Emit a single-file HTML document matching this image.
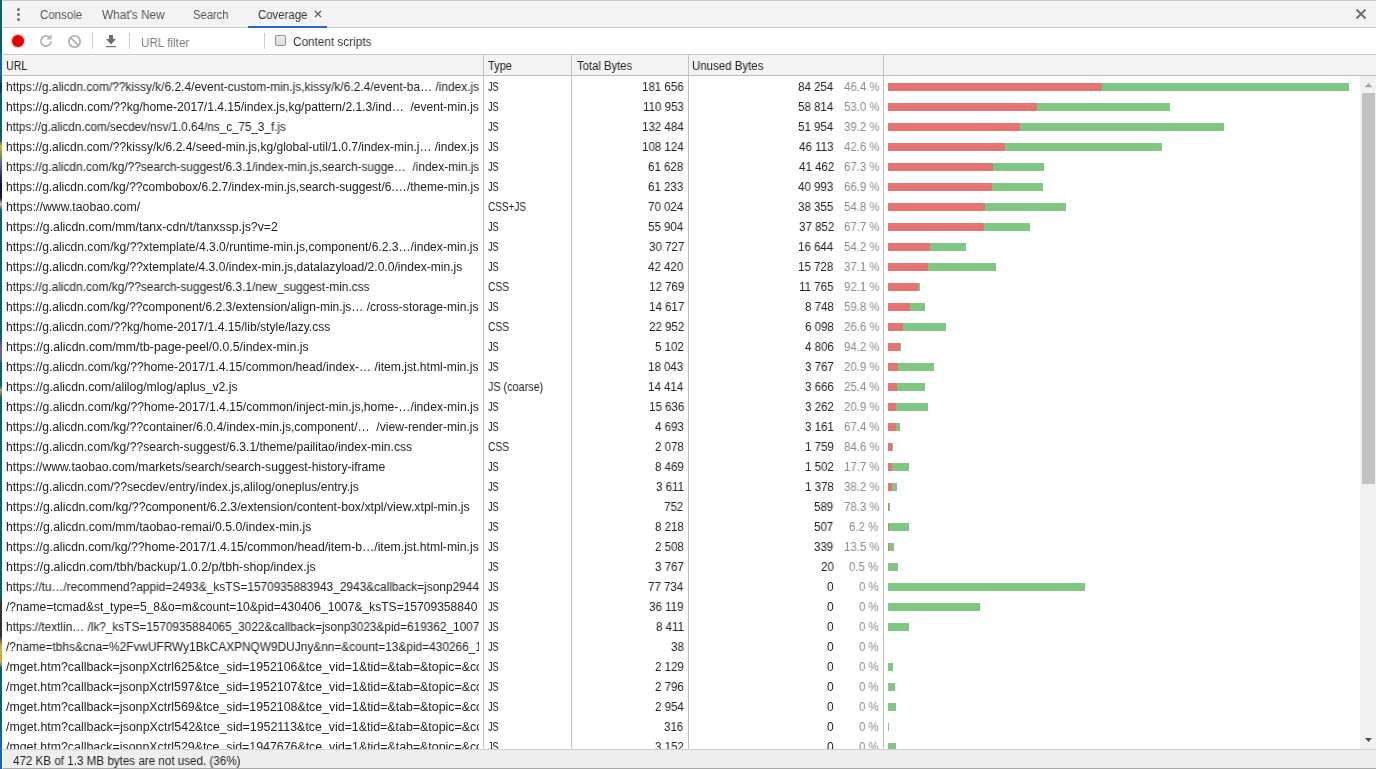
<!DOCTYPE html>
<html><head><meta charset="utf-8"><style>
html,body{margin:0;padding:0;width:1376px;height:769px;overflow:hidden;background:#fff}
.r{position:absolute}
.t{position:absolute;white-space:pre;font-family:"Liberation Sans",sans-serif;font-size:12px;line-height:20px;height:20px;transform-origin:0 0;will-change:transform}
</style></head><body>
<div class="r" style="left:0px;top:0px;width:1376px;height:1px;background:#c9c9c9;"></div>
<div class="r" style="left:0px;top:1px;width:1376px;height:26px;background:#f3f3f3;"></div>
<div class="r" style="left:0px;top:27px;width:1376px;height:1px;background:#cdcdcd;"></div>
<div class="r" style="left:0px;top:28px;width:1376px;height:26px;background:#ffffff;"></div>
<div class="r" style="left:0px;top:54px;width:1376px;height:1px;background:#cdcdcd;"></div>
<div class="r" style="left:0px;top:55px;width:1376px;height:20px;background:#f3f3f3;"></div>
<div class="r" style="left:0px;top:75px;width:1376px;height:1px;background:#bdbdbd;"></div>
<div class="r" style="left:0px;top:749px;width:1376px;height:1px;background:#cdcdcd;"></div>
<div class="r" style="left:0px;top:750px;width:1376px;height:18px;background:#eeeeee;"></div>
<div class="r" style="left:0px;top:768px;width:1376px;height:1px;background:#a8a8a8;"></div>
<div class="r" style="left:17px;top:7.5px;width:3px;height:3px;border-radius:50%;background:#6e6e6e"></div>
<div class="r" style="left:17px;top:12.5px;width:3px;height:3px;border-radius:50%;background:#6e6e6e"></div>
<div class="r" style="left:17px;top:17.5px;width:3px;height:3px;border-radius:50%;background:#6e6e6e"></div>
<div class="t" style="left:39.80px;top:5px;color:#555;transform:scaleX(0.9591);">Console</div>
<div class="t" style="left:101.80px;top:5px;color:#555;transform:scaleX(0.9844);">What&#x27;s New</div>
<div class="t" style="left:192.76px;top:5px;color:#555;transform:scaleX(0.9351);">Search</div>
<div class="t" style="left:257.80px;top:5px;color:#333;transform:scaleX(0.9500);">Coverage</div>
<div class="r" style="left:248px;top:26px;width:79px;height:2px;background:#2a6acb;"></div>
<svg class="r" style="left:314px;top:10px" width="8" height="8" viewBox="0 0 8 8"><path d="M1 1L7 7M7 1L1 7" stroke="#5f5f5f" stroke-width="1.3"/></svg>
<svg class="r" style="left:1355px;top:8px" width="12" height="12" viewBox="0 0 12 12"><path d="M1.5 1.5L10.5 10.5M10.5 1.5L1.5 10.5" stroke="#6b6b6b" stroke-width="1.8"/></svg>
<div class="r" style="left:12px;top:35px;width:12px;height:12px;border-radius:50%;background:#e40000;box-shadow:0 0 2px 1px rgba(255,120,120,.55)"></div>
<svg class="r" style="left:38px;top:33px" width="16" height="16" viewBox="0 0 16 16"><path d="M11.9 4.7A5.1 5.1 0 1 0 13.1 8" fill="none" stroke="#b3b3b3" stroke-width="1.8"/><path d="M13.6 1.2V6.4H8.2Z" fill="#b3b3b3"/></svg>
<svg class="r" style="left:66px;top:33px" width="17" height="17" viewBox="0 0 17 17"><circle cx="8.5" cy="8.5" r="5.6" fill="none" stroke="#b5b5b5" stroke-width="1.9"/><path d="M4.6 4.6L12.4 12.4" stroke="#b5b5b5" stroke-width="1.9"/></svg>
<div class="r" style="left:92px;top:33px;width:1px;height:16px;background:#cccccc;"></div>
<svg class="r" style="left:104px;top:34px" width="14" height="14" viewBox="0 0 14 14"><path d="M5 1H9V5H12L7 10.6L2 5H5Z" fill="#6e6e6e"/><rect x="2" y="12" width="10" height="1.2" fill="#6e6e6e"/></svg>
<div class="r" style="left:129px;top:33px;width:1px;height:16px;background:#cccccc;"></div>
<div class="t" style="left:140.73px;top:33px;color:#7a7a7a;transform:scaleX(0.9735);">URL filter</div>
<div class="r" style="left:264px;top:33px;width:1px;height:16px;background:#cccccc;"></div>
<div class="r" style="left:275px;top:35px;width:9px;height:9px;border:1px solid #8e8e8e;border-radius:2px;background:linear-gradient(#ededed,#dedede)"></div>
<div class="t" style="left:293.40px;top:32px;color:#333;transform:scaleX(0.9800);">Content scripts</div>
<div class="t" style="left:5.61px;top:56px;color:#222;transform:scaleX(0.8913);">URL</div>
<div class="t" style="left:488.10px;top:56px;color:#222;transform:scaleX(0.9200);">Type</div>
<div class="t" style="left:576.80px;top:56px;color:#222;transform:scaleX(0.9390);">Total Bytes</div>
<div class="t" style="left:692.44px;top:56px;color:#222;transform:scaleX(0.9554);">Unused Bytes</div>
<div class="r" style="left:483px;top:55px;width:1px;height:694px;background:#c4c4c4;"></div>
<div class="r" style="left:571px;top:55px;width:1px;height:694px;background:#c4c4c4;"></div>
<div class="r" style="left:688px;top:55px;width:1px;height:694px;background:#c4c4c4;"></div>
<div class="r" style="left:883px;top:55px;width:1px;height:694px;background:#c4c4c4;"></div>
<div class="r" style="left:0;top:76px;width:1360px;height:673px;overflow:hidden">
<div class="r" style="left:0;top:-76px;width:479px;height:769px;overflow:hidden">
<div class="t" style="left:6.01px;top:77px;color:#222;transform:scaleX(0.9949);">https://g.alicdn.com/??kissy/k/6.2.4/event-custom-min.js,kissy/k/6.2.4/event-ba… /index.js</div>
<div class="t" style="left:5.99px;top:97px;color:#222;transform:scaleX(1.0055);">https://g.alicdn.com/??kg/home-2017/1.4.15/index.js,kg/pattern/2.1.3/ind…  /event-min.js</div>
<div class="t" style="left:6.03px;top:117px;color:#222;transform:scaleX(0.9734);">https://g.alicdn.com/secdev/nsv/1.0.64/ns_c_75_3_f.js</div>
<div class="t" style="left:6.00px;top:137px;color:#222;transform:scaleX(1.0013);">https://g.alicdn.com/??kissy/k/6.2.4/seed-min.js,kg/global-util/1.0.7/index-min.j… /index.js</div>
<div class="t" style="left:6.01px;top:157px;color:#222;transform:scaleX(0.9908);">https://g.alicdn.com/kg/??search-suggest/6.3.1/index-min.js,search-sugge…  /index-min.js</div>
<div class="t" style="left:6.00px;top:177px;color:#222;transform:scaleX(1.0034);">https://g.alicdn.com/kg/??combobox/6.2.7/index-min.js,search-suggest/6.…/theme-min.js</div>
<div class="t" style="left:5.97px;top:197px;color:#222;transform:scaleX(1.0254);">https://www.taobao.com/</div>
<div class="t" style="left:5.98px;top:217px;color:#222;transform:scaleX(1.0227);">https://g.alicdn.com/mm/tanx-cdn/t/tanxssp.js?v=2</div>
<div class="t" style="left:5.99px;top:237px;color:#222;transform:scaleX(1.0077);">https://g.alicdn.com/kg/??xtemplate/4.3.0/runtime-min.js,component/6.2.3…/index-min.js</div>
<div class="t" style="left:5.99px;top:257px;color:#222;transform:scaleX(1.0058);">https://g.alicdn.com/kg/??xtemplate/4.3.0/index-min.js,datalazyload/2.0.0/index-min.js</div>
<div class="t" style="left:6.01px;top:277px;color:#222;transform:scaleX(0.9910);">https://g.alicdn.com/kg/??search-suggest/6.3.1/new_suggest-min.css</div>
<div class="t" style="left:6.00px;top:297px;color:#222;transform:scaleX(1.0034);">https://g.alicdn.com/kg/??component/6.2.3/extension/align-min.js… /cross-storage-min.js</div>
<div class="t" style="left:5.99px;top:317px;color:#222;transform:scaleX(1.0075);">https://g.alicdn.com/??kg/home-2017/1.4.15/lib/style/lazy.css</div>
<div class="t" style="left:5.97px;top:337px;color:#222;transform:scaleX(1.0269);">https://g.alicdn.com/mm/tb-page-peel/0.0.5/index-min.js</div>
<div class="t" style="left:5.99px;top:357px;color:#222;transform:scaleX(1.0120);">https://g.alicdn.com/kg/??home-2017/1.4.15/common/head/index-… /item.jst.html-min.js</div>
<div class="t" style="left:5.98px;top:377px;color:#222;transform:scaleX(1.0181);">https://g.alicdn.com/alilog/mlog/aplus_v2.js</div>
<div class="t" style="left:5.99px;top:397px;color:#222;transform:scaleX(1.0142);">https://g.alicdn.com/kg/??home-2017/1.4.15/common/inject-min.js,home-…/index-min.js</div>
<div class="t" style="left:5.99px;top:417px;color:#222;transform:scaleX(1.0077);">https://g.alicdn.com/kg/??container/6.0.4/index-min.js,component/…  /view-render-min.js</div>
<div class="t" style="left:5.99px;top:437px;color:#222;transform:scaleX(1.0080);">https://g.alicdn.com/kg/??search-suggest/6.3.1/theme/pailitao/index-min.css</div>
<div class="t" style="left:5.99px;top:457px;color:#222;transform:scaleX(1.0118);">https://www.taobao.com/markets/search/search-suggest-history-iframe</div>
<div class="t" style="left:5.99px;top:477px;color:#222;transform:scaleX(1.0080);">https://g.alicdn.com/??secdev/entry/index.js,alilog/oneplus/entry.js</div>
<div class="t" style="left:5.97px;top:497px;color:#222;transform:scaleX(1.0253);">https://g.alicdn.com/kg/??component/6.2.3/extension/content-box/xtpl/view.xtpl-min.js</div>
<div class="t" style="left:5.98px;top:517px;color:#222;transform:scaleX(1.0242);">https://g.alicdn.com/mm/taobao-remai/0.5.0/index-min.js</div>
<div class="t" style="left:5.98px;top:537px;color:#222;transform:scaleX(1.0186);">https://g.alicdn.com/kg/??home-2017/1.4.15/common/head/item-b…/item.jst.html-min.js</div>
<div class="t" style="left:5.97px;top:557px;color:#222;transform:scaleX(1.0339);">https://g.alicdn.com/tbh/backup/1.0.2/p/tbh-shop/index.js</div>
<div class="t" style="left:6.01px;top:577px;color:#222;transform:scaleX(0.9908);">https://tu…/recommend?appid=2493&amp;_ksTS=1570935883943_2943&amp;callback=jsonp2944</div>
<div class="t" style="left:6.20px;top:597px;color:#222;transform:scaleX(1.0035);">/?name=tcmad&amp;st_type=5_8&amp;o=m&amp;count=10&amp;pid=430406_1007&amp;_ksTS=15709358840</div>
<div class="t" style="left:6.02px;top:617px;color:#222;transform:scaleX(0.9846);">https://textlin… /lk?_ksTS=1570935884065_3022&amp;callback=jsonp3023&amp;pid=619362_1007</div>
<div class="t" style="left:6.20px;top:637px;color:#222;transform:scaleX(0.9897);">/?name=tbhs&amp;cna=%2FvwUFRWy1BkCAXPNQW9DUJny&amp;nn=&amp;count=13&amp;pid=430266_1007</div>
<div class="t" style="left:6.20px;top:657px;color:#222;transform:scaleX(1.0303);">/mget.htm?callback=jsonpXctrl625&amp;tce_sid=1952106&amp;tce_vid=1&amp;tid=&amp;tab=&amp;topic=&amp;count=</div>
<div class="t" style="left:6.20px;top:677px;color:#222;transform:scaleX(1.0303);">/mget.htm?callback=jsonpXctrl597&amp;tce_sid=1952107&amp;tce_vid=1&amp;tid=&amp;tab=&amp;topic=&amp;count=</div>
<div class="t" style="left:6.20px;top:697px;color:#222;transform:scaleX(1.0303);">/mget.htm?callback=jsonpXctrl569&amp;tce_sid=1952108&amp;tce_vid=1&amp;tid=&amp;tab=&amp;topic=&amp;count=</div>
<div class="t" style="left:6.20px;top:717px;color:#222;transform:scaleX(1.0325);">/mget.htm?callback=jsonpXctrl542&amp;tce_sid=1952113&amp;tce_vid=1&amp;tid=&amp;tab=&amp;topic=&amp;count=</div>
<div class="t" style="left:6.20px;top:737px;color:#222;transform:scaleX(1.0303);">/mget.htm?callback=jsonpXctrl529&amp;tce_sid=1947676&amp;tce_vid=1&amp;tid=&amp;tab=&amp;topic=&amp;count=</div>
</div><div class="r" style="left:0;top:-76px;width:1360px;height:769px">
<div class="t" style="left:488.10px;top:77px;color:#222;transform:scaleX(0.7500);">JS</div>
<div class="t" style="left:642.22px;top:77px;color:#222;transform:scaleX(0.9600);">181 656</div>
<div class="t" style="left:797.98px;top:77px;color:#222;transform:scaleX(0.9600);">84 254</div>
<div class="t" style="left:843.65px;top:77px;color:#8a8a8a;transform:scaleX(0.9500);">46.4 %</div>
<div class="r" style="left:888px;top:83px;width:461.0px;height:8px;background:#81c784;"></div>
<div class="r" style="left:888px;top:83px;width:213.82px;height:8px;background:#e57373;"></div>
<div class="t" style="left:488.10px;top:97px;color:#222;transform:scaleX(0.7500);">JS</div>
<div class="t" style="left:643.18px;top:97px;color:#222;transform:scaleX(0.9600);">110 953</div>
<div class="t" style="left:797.98px;top:97px;color:#222;transform:scaleX(0.9600);">58 814</div>
<div class="t" style="left:843.65px;top:97px;color:#8a8a8a;transform:scaleX(0.9500);">53.0 %</div>
<div class="r" style="left:888px;top:103px;width:281.57px;height:8px;background:#81c784;"></div>
<div class="r" style="left:888px;top:103px;width:149.26px;height:8px;background:#e57373;"></div>
<div class="t" style="left:488.10px;top:117px;color:#222;transform:scaleX(0.7500);">JS</div>
<div class="t" style="left:642.22px;top:117px;color:#222;transform:scaleX(0.9600);">132 484</div>
<div class="t" style="left:797.98px;top:117px;color:#222;transform:scaleX(0.9600);">51 954</div>
<div class="t" style="left:843.65px;top:117px;color:#8a8a8a;transform:scaleX(0.9500);">39.2 %</div>
<div class="r" style="left:888px;top:123px;width:336.21px;height:8px;background:#81c784;"></div>
<div class="r" style="left:888px;top:123px;width:131.85px;height:8px;background:#e57373;"></div>
<div class="t" style="left:488.10px;top:137px;color:#222;transform:scaleX(0.7500);">JS</div>
<div class="t" style="left:642.22px;top:137px;color:#222;transform:scaleX(0.9600);">108 124</div>
<div class="t" style="left:798.94px;top:137px;color:#222;transform:scaleX(0.9600);">46 113</div>
<div class="t" style="left:843.65px;top:137px;color:#8a8a8a;transform:scaleX(0.9500);">42.6 %</div>
<div class="r" style="left:888px;top:143px;width:274.39px;height:8px;background:#81c784;"></div>
<div class="r" style="left:888px;top:143px;width:117.02px;height:8px;background:#e57373;"></div>
<div class="t" style="left:488.10px;top:157px;color:#222;transform:scaleX(0.7500);">JS</div>
<div class="t" style="left:647.98px;top:157px;color:#222;transform:scaleX(0.9600);">61 628</div>
<div class="t" style="left:798.94px;top:157px;color:#222;transform:scaleX(0.9600);">41 462</div>
<div class="t" style="left:843.65px;top:157px;color:#8a8a8a;transform:scaleX(0.9500);">67.3 %</div>
<div class="r" style="left:888px;top:163px;width:156.4px;height:8px;background:#81c784;"></div>
<div class="r" style="left:888px;top:163px;width:105.22px;height:8px;background:#e57373;"></div>
<div class="t" style="left:488.10px;top:177px;color:#222;transform:scaleX(0.7500);">JS</div>
<div class="t" style="left:647.98px;top:177px;color:#222;transform:scaleX(0.9600);">61 233</div>
<div class="t" style="left:797.98px;top:177px;color:#222;transform:scaleX(0.9600);">40 993</div>
<div class="t" style="left:843.65px;top:177px;color:#8a8a8a;transform:scaleX(0.9500);">66.9 %</div>
<div class="r" style="left:888px;top:183px;width:155.39px;height:8px;background:#81c784;"></div>
<div class="r" style="left:888px;top:183px;width:104.03px;height:8px;background:#e57373;"></div>
<div class="t" style="left:488.10px;top:197px;color:#222;transform:scaleX(0.8300);">CSS+JS</div>
<div class="t" style="left:647.98px;top:197px;color:#222;transform:scaleX(0.9600);">70 024</div>
<div class="t" style="left:797.98px;top:197px;color:#222;transform:scaleX(0.9600);">38 355</div>
<div class="t" style="left:843.65px;top:197px;color:#8a8a8a;transform:scaleX(0.9500);">54.8 %</div>
<div class="r" style="left:888px;top:203px;width:177.7px;height:8px;background:#81c784;"></div>
<div class="r" style="left:888px;top:203px;width:97.34px;height:8px;background:#e57373;"></div>
<div class="t" style="left:488.10px;top:217px;color:#222;transform:scaleX(0.7500);">JS</div>
<div class="t" style="left:647.98px;top:217px;color:#222;transform:scaleX(0.9600);">55 904</div>
<div class="t" style="left:798.94px;top:217px;color:#222;transform:scaleX(0.9600);">37 852</div>
<div class="t" style="left:843.65px;top:217px;color:#8a8a8a;transform:scaleX(0.9500);">67.7 %</div>
<div class="r" style="left:888px;top:223px;width:141.87px;height:8px;background:#81c784;"></div>
<div class="r" style="left:888px;top:223px;width:96.06px;height:8px;background:#e57373;"></div>
<div class="t" style="left:488.10px;top:237px;color:#222;transform:scaleX(0.7500);">JS</div>
<div class="t" style="left:648.94px;top:237px;color:#222;transform:scaleX(0.9600);">30 727</div>
<div class="t" style="left:797.98px;top:237px;color:#222;transform:scaleX(0.9600);">16 644</div>
<div class="t" style="left:843.65px;top:237px;color:#8a8a8a;transform:scaleX(0.9500);">54.2 %</div>
<div class="r" style="left:888px;top:243px;width:77.98px;height:8px;background:#81c784;"></div>
<div class="r" style="left:888px;top:243px;width:42.24px;height:8px;background:#e57373;"></div>
<div class="t" style="left:488.10px;top:257px;color:#222;transform:scaleX(0.7500);">JS</div>
<div class="t" style="left:647.98px;top:257px;color:#222;transform:scaleX(0.9600);">42 420</div>
<div class="t" style="left:797.98px;top:257px;color:#222;transform:scaleX(0.9600);">15 728</div>
<div class="t" style="left:843.65px;top:257px;color:#8a8a8a;transform:scaleX(0.9500);">37.1 %</div>
<div class="r" style="left:888px;top:263px;width:107.65px;height:8px;background:#81c784;"></div>
<div class="r" style="left:888px;top:263px;width:39.91px;height:8px;background:#e57373;"></div>
<div class="t" style="left:488.10px;top:277px;color:#222;transform:scaleX(0.8500);">CSS</div>
<div class="t" style="left:648.94px;top:277px;color:#222;transform:scaleX(0.9600);">12 769</div>
<div class="t" style="left:798.94px;top:277px;color:#222;transform:scaleX(0.9600);">11 765</div>
<div class="t" style="left:843.65px;top:277px;color:#8a8a8a;transform:scaleX(0.9500);">92.1 %</div>
<div class="r" style="left:888px;top:283px;width:32.4px;height:8px;background:#81c784;"></div>
<div class="r" style="left:888px;top:283px;width:29.86px;height:8px;background:#e57373;"></div>
<div class="t" style="left:488.10px;top:297px;color:#222;transform:scaleX(0.7500);">JS</div>
<div class="t" style="left:648.94px;top:297px;color:#222;transform:scaleX(0.9600);">14 617</div>
<div class="t" style="left:804.70px;top:297px;color:#222;transform:scaleX(0.9600);">8 748</div>
<div class="t" style="left:843.65px;top:297px;color:#8a8a8a;transform:scaleX(0.9500);">59.8 %</div>
<div class="r" style="left:888px;top:303px;width:37.09px;height:8px;background:#81c784;"></div>
<div class="r" style="left:888px;top:303px;width:22.2px;height:8px;background:#e57373;"></div>
<div class="t" style="left:488.10px;top:317px;color:#222;transform:scaleX(0.8500);">CSS</div>
<div class="t" style="left:648.94px;top:317px;color:#222;transform:scaleX(0.9600);">22 952</div>
<div class="t" style="left:804.70px;top:317px;color:#222;transform:scaleX(0.9600);">6 098</div>
<div class="t" style="left:843.65px;top:317px;color:#8a8a8a;transform:scaleX(0.9500);">26.6 %</div>
<div class="r" style="left:888px;top:323px;width:58.25px;height:8px;background:#81c784;"></div>
<div class="r" style="left:888px;top:323px;width:15.48px;height:8px;background:#e57373;"></div>
<div class="t" style="left:488.10px;top:337px;color:#222;transform:scaleX(0.7500);">JS</div>
<div class="t" style="left:654.70px;top:337px;color:#222;transform:scaleX(0.9600);">5 102</div>
<div class="t" style="left:804.70px;top:337px;color:#222;transform:scaleX(0.9600);">4 806</div>
<div class="t" style="left:843.65px;top:337px;color:#8a8a8a;transform:scaleX(0.9500);">94.2 %</div>
<div class="r" style="left:888px;top:343px;width:12.95px;height:8px;background:#81c784;"></div>
<div class="r" style="left:888px;top:343px;width:12.2px;height:8px;background:#e57373;"></div>
<div class="t" style="left:488.10px;top:357px;color:#222;transform:scaleX(0.7500);">JS</div>
<div class="t" style="left:647.98px;top:357px;color:#222;transform:scaleX(0.9600);">18 043</div>
<div class="t" style="left:804.70px;top:357px;color:#222;transform:scaleX(0.9600);">3 767</div>
<div class="t" style="left:843.65px;top:357px;color:#8a8a8a;transform:scaleX(0.9500);">20.9 %</div>
<div class="r" style="left:888px;top:363px;width:45.79px;height:8px;background:#81c784;"></div>
<div class="r" style="left:888px;top:363px;width:9.56px;height:8px;background:#e57373;"></div>
<div class="t" style="left:488.10px;top:377px;color:#222;transform:scaleX(0.9000);">JS (coarse)</div>
<div class="t" style="left:647.98px;top:377px;color:#222;transform:scaleX(0.9600);">14 414</div>
<div class="t" style="left:804.70px;top:377px;color:#222;transform:scaleX(0.9600);">3 666</div>
<div class="t" style="left:843.65px;top:377px;color:#8a8a8a;transform:scaleX(0.9500);">25.4 %</div>
<div class="r" style="left:888px;top:383px;width:36.58px;height:8px;background:#81c784;"></div>
<div class="r" style="left:888px;top:383px;width:9.3px;height:8px;background:#e57373;"></div>
<div class="t" style="left:488.10px;top:397px;color:#222;transform:scaleX(0.7500);">JS</div>
<div class="t" style="left:648.94px;top:397px;color:#222;transform:scaleX(0.9600);">15 636</div>
<div class="t" style="left:804.70px;top:397px;color:#222;transform:scaleX(0.9600);">3 262</div>
<div class="t" style="left:843.65px;top:397px;color:#8a8a8a;transform:scaleX(0.9500);">20.9 %</div>
<div class="r" style="left:888px;top:403px;width:39.68px;height:8px;background:#81c784;"></div>
<div class="r" style="left:888px;top:403px;width:8.28px;height:8px;background:#e57373;"></div>
<div class="t" style="left:488.10px;top:417px;color:#222;transform:scaleX(0.7500);">JS</div>
<div class="t" style="left:654.70px;top:417px;color:#222;transform:scaleX(0.9600);">4 693</div>
<div class="t" style="left:804.70px;top:417px;color:#222;transform:scaleX(0.9600);">3 161</div>
<div class="t" style="left:843.65px;top:417px;color:#8a8a8a;transform:scaleX(0.9500);">67.4 %</div>
<div class="r" style="left:888px;top:423px;width:11.91px;height:8px;background:#81c784;"></div>
<div class="r" style="left:888px;top:423px;width:8.02px;height:8px;background:#e57373;"></div>
<div class="t" style="left:488.10px;top:437px;color:#222;transform:scaleX(0.8500);">CSS</div>
<div class="t" style="left:654.70px;top:437px;color:#222;transform:scaleX(0.9600);">2 078</div>
<div class="t" style="left:804.70px;top:437px;color:#222;transform:scaleX(0.9600);">1 759</div>
<div class="t" style="left:843.65px;top:437px;color:#8a8a8a;transform:scaleX(0.9500);">84.6 %</div>
<div class="r" style="left:888px;top:443px;width:5.27px;height:8px;background:#81c784;"></div>
<div class="r" style="left:888px;top:443px;width:4.46px;height:8px;background:#e57373;"></div>
<div class="t" style="left:488.10px;top:457px;color:#222;transform:scaleX(0.7500);">JS</div>
<div class="t" style="left:654.70px;top:457px;color:#222;transform:scaleX(0.9600);">8 469</div>
<div class="t" style="left:804.70px;top:457px;color:#222;transform:scaleX(0.9600);">1 502</div>
<div class="t" style="left:843.65px;top:457px;color:#8a8a8a;transform:scaleX(0.9500);">17.7 %</div>
<div class="r" style="left:888px;top:463px;width:21.49px;height:8px;background:#81c784;"></div>
<div class="r" style="left:888px;top:463px;width:3.81px;height:8px;background:#e57373;"></div>
<div class="t" style="left:488.10px;top:477px;color:#222;transform:scaleX(0.7500);">JS</div>
<div class="t" style="left:655.66px;top:477px;color:#222;transform:scaleX(0.9600);">3 611</div>
<div class="t" style="left:804.70px;top:477px;color:#222;transform:scaleX(0.9600);">1 378</div>
<div class="t" style="left:843.65px;top:477px;color:#8a8a8a;transform:scaleX(0.9500);">38.2 %</div>
<div class="r" style="left:888px;top:483px;width:9.16px;height:8px;background:#81c784;"></div>
<div class="r" style="left:888px;top:483px;width:3.5px;height:8px;background:#e57373;"></div>
<div class="t" style="left:488.10px;top:497px;color:#222;transform:scaleX(0.7500);">JS</div>
<div class="t" style="left:664.30px;top:497px;color:#222;transform:scaleX(0.9600);">752</div>
<div class="t" style="left:814.30px;top:497px;color:#222;transform:scaleX(0.9600);">589</div>
<div class="t" style="left:843.65px;top:497px;color:#8a8a8a;transform:scaleX(0.9500);">78.3 %</div>
<div class="r" style="left:888px;top:503px;width:1.91px;height:8px;background:#81c784;"></div>
<div class="r" style="left:888px;top:503px;width:1.49px;height:8px;background:#e57373;"></div>
<div class="t" style="left:488.10px;top:517px;color:#222;transform:scaleX(0.7500);">JS</div>
<div class="t" style="left:654.70px;top:517px;color:#222;transform:scaleX(0.9600);">8 218</div>
<div class="t" style="left:814.30px;top:517px;color:#222;transform:scaleX(0.9600);">507</div>
<div class="t" style="left:849.35px;top:517px;color:#8a8a8a;transform:scaleX(0.9500);">6.2 %</div>
<div class="r" style="left:888px;top:523px;width:20.86px;height:8px;background:#81c784;"></div>
<div class="r" style="left:888px;top:523px;width:1.29px;height:8px;background:#e57373;"></div>
<div class="t" style="left:488.10px;top:537px;color:#222;transform:scaleX(0.7500);">JS</div>
<div class="t" style="left:654.70px;top:537px;color:#222;transform:scaleX(0.9600);">2 508</div>
<div class="t" style="left:814.30px;top:537px;color:#222;transform:scaleX(0.9600);">339</div>
<div class="t" style="left:843.65px;top:537px;color:#8a8a8a;transform:scaleX(0.9500);">13.5 %</div>
<div class="r" style="left:888px;top:543px;width:6.36px;height:8px;background:#81c784;"></div>
<div class="r" style="left:888px;top:543px;width:0.86px;height:8px;background:#e57373;"></div>
<div class="t" style="left:488.10px;top:557px;color:#222;transform:scaleX(0.7500);">JS</div>
<div class="t" style="left:654.70px;top:557px;color:#222;transform:scaleX(0.9600);">3 767</div>
<div class="t" style="left:821.02px;top:557px;color:#222;transform:scaleX(0.9600);">20</div>
<div class="t" style="left:849.35px;top:557px;color:#8a8a8a;transform:scaleX(0.9500);">0.5 %</div>
<div class="r" style="left:888px;top:563px;width:9.56px;height:8px;background:#81c784;"></div>
<div class="t" style="left:488.10px;top:577px;color:#222;transform:scaleX(0.7500);">JS</div>
<div class="t" style="left:647.98px;top:577px;color:#222;transform:scaleX(0.9600);">77 734</div>
<div class="t" style="left:827.48px;top:577px;color:#222;transform:scaleX(0.9600);">0</div>
<div class="t" style="left:858.85px;top:577px;color:#8a8a8a;transform:scaleX(0.9500);">0 %</div>
<div class="r" style="left:888px;top:583px;width:197.27px;height:8px;background:#81c784;"></div>
<div class="t" style="left:488.10px;top:597px;color:#222;transform:scaleX(0.7500);">JS</div>
<div class="t" style="left:648.94px;top:597px;color:#222;transform:scaleX(0.9600);">36 119</div>
<div class="t" style="left:827.48px;top:597px;color:#222;transform:scaleX(0.9600);">0</div>
<div class="t" style="left:858.85px;top:597px;color:#8a8a8a;transform:scaleX(0.9500);">0 %</div>
<div class="r" style="left:888px;top:603px;width:91.66px;height:8px;background:#81c784;"></div>
<div class="t" style="left:488.10px;top:617px;color:#222;transform:scaleX(0.7500);">JS</div>
<div class="t" style="left:655.66px;top:617px;color:#222;transform:scaleX(0.9600);">8 411</div>
<div class="t" style="left:827.48px;top:617px;color:#222;transform:scaleX(0.9600);">0</div>
<div class="t" style="left:858.85px;top:617px;color:#8a8a8a;transform:scaleX(0.9500);">0 %</div>
<div class="r" style="left:888px;top:623px;width:21.35px;height:8px;background:#81c784;"></div>
<div class="t" style="left:488.10px;top:637px;color:#222;transform:scaleX(0.7500);">JS</div>
<div class="t" style="left:671.02px;top:637px;color:#222;transform:scaleX(0.9600);">38</div>
<div class="t" style="left:827.48px;top:637px;color:#222;transform:scaleX(0.9600);">0</div>
<div class="t" style="left:858.85px;top:637px;color:#8a8a8a;transform:scaleX(0.9500);">0 %</div>
<div class="t" style="left:488.10px;top:657px;color:#222;transform:scaleX(0.7500);">JS</div>
<div class="t" style="left:654.70px;top:657px;color:#222;transform:scaleX(0.9600);">2 129</div>
<div class="t" style="left:827.48px;top:657px;color:#222;transform:scaleX(0.9600);">0</div>
<div class="t" style="left:858.85px;top:657px;color:#8a8a8a;transform:scaleX(0.9500);">0 %</div>
<div class="r" style="left:888px;top:663px;width:5.4px;height:8px;background:#81c784;"></div>
<div class="t" style="left:488.10px;top:677px;color:#222;transform:scaleX(0.7500);">JS</div>
<div class="t" style="left:654.70px;top:677px;color:#222;transform:scaleX(0.9600);">2 796</div>
<div class="t" style="left:827.48px;top:677px;color:#222;transform:scaleX(0.9600);">0</div>
<div class="t" style="left:858.85px;top:677px;color:#8a8a8a;transform:scaleX(0.9500);">0 %</div>
<div class="r" style="left:888px;top:683px;width:7.1px;height:8px;background:#81c784;"></div>
<div class="t" style="left:488.10px;top:697px;color:#222;transform:scaleX(0.7500);">JS</div>
<div class="t" style="left:654.70px;top:697px;color:#222;transform:scaleX(0.9600);">2 954</div>
<div class="t" style="left:827.48px;top:697px;color:#222;transform:scaleX(0.9600);">0</div>
<div class="t" style="left:858.85px;top:697px;color:#8a8a8a;transform:scaleX(0.9500);">0 %</div>
<div class="r" style="left:888px;top:703px;width:7.5px;height:8px;background:#81c784;"></div>
<div class="t" style="left:488.10px;top:717px;color:#222;transform:scaleX(0.7500);">JS</div>
<div class="t" style="left:664.30px;top:717px;color:#222;transform:scaleX(0.9600);">316</div>
<div class="t" style="left:827.48px;top:717px;color:#222;transform:scaleX(0.9600);">0</div>
<div class="t" style="left:858.85px;top:717px;color:#8a8a8a;transform:scaleX(0.9500);">0 %</div>
<div class="r" style="left:888px;top:723px;width:0.8px;height:8px;background:#81c784;"></div>
<div class="t" style="left:488.10px;top:737px;color:#222;transform:scaleX(0.7500);">JS</div>
<div class="t" style="left:654.70px;top:737px;color:#222;transform:scaleX(0.9600);">3 152</div>
<div class="t" style="left:827.48px;top:737px;color:#222;transform:scaleX(0.9600);">0</div>
<div class="t" style="left:858.85px;top:737px;color:#8a8a8a;transform:scaleX(0.9500);">0 %</div>
<div class="r" style="left:888px;top:743px;width:8.0px;height:8px;background:#81c784;"></div>
</div></div>
<div class="t" style="left:13.10px;top:751px;color:#222;transform:scaleX(0.9688);">472 KB of 1.3 MB bytes are not used. (36%)</div>
<div class="r" style="left:1360px;top:76px;width:16px;height:673px;background:#f1f1f1;"></div>
<div class="r" style="left:1362px;top:93px;width:13px;height:391px;background:#c1c1c1;"></div>
<svg class="r" style="left:1360px;top:76px" width="16" height="17" viewBox="0 0 16 17"><path d="M4.8 11.2H12.2L8.5 7Z" fill="#a3a3a3"/></svg>
<svg class="r" style="left:1360px;top:732px" width="16" height="17" viewBox="0 0 16 17"><path d="M5 6H12L8.5 10Z" fill="#505050"/></svg>
<div class="r" style="left:0;top:0;width:2px;height:769px;background:linear-gradient(#0b6070 0px,#0b6070 50px,#1a5fb0 56px,#1a5fb0 74px,#0b6070 80px,#0b2a55 86px,#0b6070 95px,#0b6070 140px,#c9b23a 146px,#5fa040 156px,#5a60b0 164px,#2a2a70 176px,#061840 184px,#061840 198px,#d8b8b0 204px,#0b6070 210px,#0b6070 340px,#6a5aa0 345px,#6a5aa0 358px,#0b6070 364px,#0b6070 386px,#c8a060 390px,#0b6070 398px,#0b6070 596px,#3a3030 604px,#2a3040 636px,#c8b040 646px,#c8b040 662px,#0b6070 668px,#0b6070 725px,#1565c0 740px,#1565c0 769px)"></div>
<div class="r" style="left:2px;top:1px;width:1px;height:768px;background:rgba(255,255,255,.6)"></div>
</body></html>
